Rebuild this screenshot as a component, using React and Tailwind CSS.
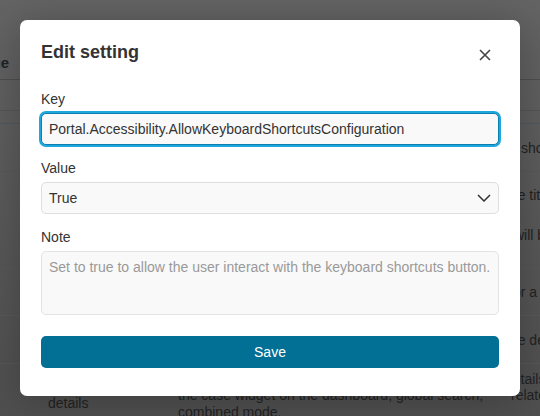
import React from "react";

const font = { fontFamily: '"Liberation Sans", Arial, sans-serif' };

function Desc({ spacer, hidden, visible, top = false }) {
  return (
    <div className={`flex h-full ${top ? "items-start pt-[8px]" : "items-center"}`}>
      <div className="w-[48px] shrink-0" />
      <div className="w-[130px] shrink-0" />
      <div className="whitespace-nowrap text-[14px] leading-[16px]">
        <span className={`inline-block ${spacer}`}>{hidden}</span>
        {visible}
      </div>
    </div>
  );
}

export default function App() {
  return (
    <div
      className="relative h-[416px] w-[540px] overflow-hidden bg-linear-to-b from-[#646464] to-[#4f4f4f] text-[#222]"
      style={font}
    >
      {/* background page (dimmed) */}
      <div className="flex flex-col">
        <div className="flex h-[80px] items-end border-b border-[#4e4e4e] pb-[5px]">
          <span className="ml-[-30px] text-[15px] font-bold">Value</span>
        </div>
        <div className="h-[31px] border-b border-[#555]" />
        <div className="h-[13px] border-b border-[#4c5860]" />
        <div className="h-[48px] border-b border-[#585858]">
          <Desc spacer="w-[343px]" hidden="Allow the user to use the keyboard" visible="shortcuts" />
        </div>
        <div className="h-[47px] border-b border-[#585858]">
          <Desc spacer="w-[328px]" hidden="Display the application name as" visible="the title" />
        </div>
        <div className="h-[49px] border-b border-[#585858]">
          <Desc top spacer="w-[336px]" hidden="Number of items that are loaded that" visible="will be" />
        </div>
        <div className="h-[48px] border-b border-[#585858]">
          <Desc spacer="w-[331px]" hidden="Time in minutes to wait before asking" visible="for a case" />
        </div>
        <div className="h-[48px] border-b border-[#585858]">
          <Desc spacer="w-[328px]" hidden="Allow the user to configure and change" visible="the default" />
        </div>
        <div className="flex pt-[7px]">
          <div className="w-[48px] shrink-0" />
          <div className="w-[130px] shrink-0 pt-[24px] text-[14px] leading-[16px]">details</div>
          <div className="whitespace-nowrap text-[14px] leading-[16px]">
            <span className="inline-block w-[327px]">Show the case information in the case</span>details
            <br />
            <span className="inline-block w-[333px]">the case widget on the dashboard, global search,</span>related cases
            <br />
            <span className="inline-block pt-[1px]">combined mode.</span>
          </div>
        </div>
      </div>

      {/* modal dialog */}
      <div className="absolute left-[20px] top-[20px] w-[500px] rounded-[7px] bg-white px-[21px] pb-[28px] pt-[20px] shadow-[0_4px_40px_rgba(0,0,0,0.25)]">
        <div className="flex items-start justify-between">
          <h2 className="text-[18px] font-bold leading-[24px] text-[#333]">Edit setting</h2>
          <button className="mr-[8px] mt-[9px] text-[#444]" aria-label="Close">
            <svg width="12" height="12" viewBox="0 0 12 12" fill="none">
              <path d="M1 1L11 11M11 1L1 11" stroke="currentColor" strokeWidth="1.6" />
            </svg>
          </button>
        </div>

        <div className="mt-[25px] flex flex-col">
          <label className="mb-[4px] text-[14px] leading-[20px] text-[#333]">Key</label>
          <div className="flex h-[32px] items-center rounded-[5px] border border-[#0a7fae] bg-[#f9f9f9] pl-[7px] text-[14px] text-[#333] shadow-[0_0_0_2px_#1ea6de]">
            Portal.Accessibility.AllowKeyboardShortcutsConfiguration
          </div>

          <label className="mb-[4px] mt-[13px] text-[14px] leading-[20px] text-[#333]">Value</label>
          <div className="flex h-[32px] items-center justify-between rounded-[5px] border border-[#dedede] bg-[#f9f9f9] pl-[7px] pr-[7px] text-[14px] text-[#333]">
            <span>True</span>
            <svg width="14" height="8" viewBox="0 0 14 8" fill="none" className="text-[#333]">
              <path d="M1 1L7 7L13 1" stroke="currentColor" strokeWidth="1.5" />
            </svg>
          </div>

          <label className="mb-[4px] mt-[13px] text-[14px] leading-[20px] text-[#333]">Note</label>
          <div className="h-[64px] rounded-[5px] border border-[#e3e3e3] bg-[#f9f9f9] pl-[7px] pt-[5px] text-[14px] leading-[20px] text-[#999]">
            Set to true to allow the user interact with the keyboard shortcuts button.
          </div>

          <button className="mt-[21px] h-[32px] rounded-[5px] bg-[#026f94] text-[14px] font-normal text-white">
            Save
          </button>
        </div>
      </div>
    </div>
  );
}
